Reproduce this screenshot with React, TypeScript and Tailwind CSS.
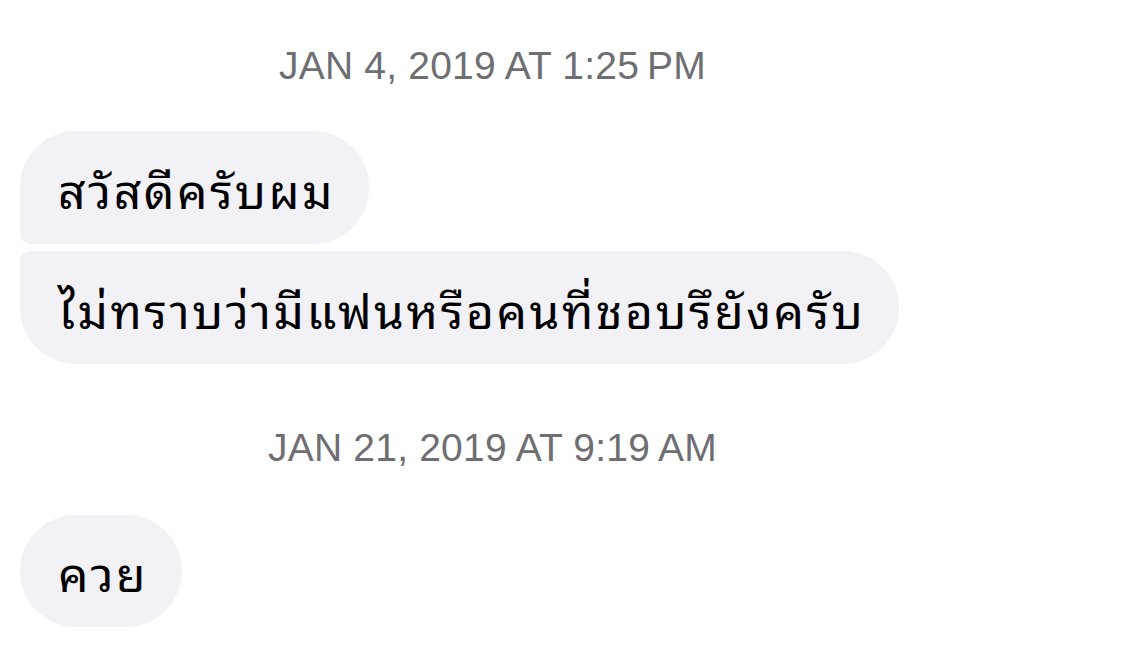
export default function App() {
  const thai = { fontFamily: '"Noto Sans Thai Looped", "Noto Serif Thai", "Noto Sans Thai", "DejaVu Sans", "Liberation Sans", sans-serif' };
  return (
    <div className="w-[1135px] h-[645px] bg-white overflow-hidden font-['Liberation_Sans',sans-serif]">
      <div className="w-[985px] text-center pt-[42px] text-[39px] leading-[48px] text-[#6e6e73] tracking-[0.2px]">
        JAN 4, 2019 AT 1:25{'\u2009'}PM
      </div>
      <div className="pl-[20px] mt-[41px] flex flex-col items-start gap-[7px]" style={thai}>
        <div className="h-[113px] flex items-center pl-[38px] pr-[34px] bg-[#f1f1f6] rounded-[56px] rounded-bl-[10px] text-[48px] tracking-[2.5px] text-black">
          สวัสดีครับผม
        </div>
        <div className="h-[113px] flex items-center pl-[38px] pr-[34px] bg-[#f1f1f6] rounded-[56px] rounded-tl-[10px] text-[48px] tracking-[2.5px] text-black">
          ไม่ทราบว่ามีแฟนหรือคนที่ชอบรึยังครับ
        </div>
      </div>
      <div className="w-[985px] text-center mt-[60px] text-[39px] leading-[48px] text-[#6e6e73] tracking-[0.2px]">
        JAN 21, 2019 AT 9:19{'\u2009'}AM
      </div>
      <div className="pl-[20px] mt-[43px] flex" style={thai}>
        <div className="h-[112px] flex items-center pl-[38px] pr-[34px] bg-[#f1f1f6] rounded-[56px] text-[48px] tracking-[2.5px] text-black">
          ควย
        </div>
      </div>
    </div>
  );
}
